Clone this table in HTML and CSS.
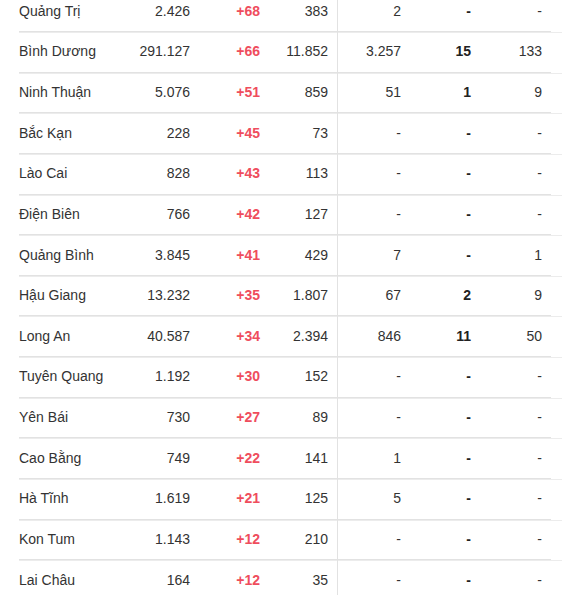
FILE: index.html
```html
<!DOCTYPE html>
<html lang="vi">
<head>
<meta charset="utf-8">
<title>Bảng số liệu</title>
<link rel="stylesheet" href="styles.css">
</head>
<body>
<div class="table">
  <div class="row"><div class="cells"><span class="name">Quảng Trị</span><span>2.426</span><span class="inc">+68</span><span class="sep">383</span><span>2</span><span class="b">-</span><span>-</span></div></div>
  <div class="row"><div class="cells"><span class="name">Bình Dương</span><span>291.127</span><span class="inc">+66</span><span class="sep">11.852</span><span>3.257</span><span class="b">15</span><span>133</span></div></div>
  <div class="row"><div class="cells"><span class="name">Ninh Thuận</span><span>5.076</span><span class="inc">+51</span><span class="sep">859</span><span>51</span><span class="b">1</span><span>9</span></div></div>
  <div class="row"><div class="cells"><span class="name">Bắc Kạn</span><span>228</span><span class="inc">+45</span><span class="sep">73</span><span>-</span><span class="b">-</span><span>-</span></div></div>
  <div class="row"><div class="cells"><span class="name">Lào Cai</span><span>828</span><span class="inc">+43</span><span class="sep">113</span><span>-</span><span class="b">-</span><span>-</span></div></div>
  <div class="row"><div class="cells"><span class="name">Điện Biên</span><span>766</span><span class="inc">+42</span><span class="sep">127</span><span>-</span><span class="b">-</span><span>-</span></div></div>
  <div class="row"><div class="cells"><span class="name">Quảng Bình</span><span>3.845</span><span class="inc">+41</span><span class="sep">429</span><span>7</span><span class="b">-</span><span>1</span></div></div>
  <div class="row"><div class="cells"><span class="name">Hậu Giang</span><span>13.232</span><span class="inc">+35</span><span class="sep">1.807</span><span>67</span><span class="b">2</span><span>9</span></div></div>
  <div class="row"><div class="cells"><span class="name">Long An</span><span>40.587</span><span class="inc">+34</span><span class="sep">2.394</span><span>846</span><span class="b">11</span><span>50</span></div></div>
  <div class="row"><div class="cells"><span class="name">Tuyên Quang</span><span>1.192</span><span class="inc">+30</span><span class="sep">152</span><span>-</span><span class="b">-</span><span>-</span></div></div>
  <div class="row"><div class="cells"><span class="name">Yên Bái</span><span>730</span><span class="inc">+27</span><span class="sep">89</span><span>-</span><span class="b">-</span><span>-</span></div></div>
  <div class="row"><div class="cells"><span class="name">Cao Bằng</span><span>749</span><span class="inc">+22</span><span class="sep">141</span><span>1</span><span class="b">-</span><span>-</span></div></div>
  <div class="row"><div class="cells"><span class="name">Hà Tĩnh</span><span>1.619</span><span class="inc">+21</span><span class="sep">125</span><span>5</span><span class="b">-</span><span>-</span></div></div>
  <div class="row"><div class="cells"><span class="name">Kon Tum</span><span>1.143</span><span class="inc">+12</span><span class="sep">210</span><span>-</span><span class="b">-</span><span>-</span></div></div>
  <div class="row"><div class="cells"><span class="name">Lai Châu</span><span>164</span><span class="inc">+12</span><span class="sep">35</span><span>-</span><span class="b">-</span><span>-</span></div></div>
</div>
</body>
</html>
```

FILE: styles.css
```css
html, body {
  margin: 0;
  padding: 0;
  background: #fff;
}

body {
  font-family: Arial, "Liberation Sans", sans-serif;
  font-size: 14px;
  color: #333;
  overflow: hidden;
}

.table {
  margin-top: -7.64px;
  margin-left: 19px;
  width: 543px;
}

.row {
  border-bottom: 1px solid #ececec;
}

.cells {
  width: 532px;
  display: grid;
  grid-template-columns: 110px 70px 70px 69px 72px 70px 71px;
  border-bottom: 1px solid #e2e2e2;
}

.cells > span {
  text-align: right;
  padding: 8.4px 9px 10.24px 0;
  line-height: 20px;
  white-space: nowrap;
}

.cells > .name {
  text-align: left;
  padding-right: 0;
}

.cells > .inc {
  color: #ef4d5d;
  font-weight: bold;
}

.cells > .sep {
  border-right: 1px solid #e2e2e2;
  margin-bottom: -2px;
  padding-bottom: 12.24px;
}

.cells > .b {
  font-weight: bold;
  color: #222;
}
```
